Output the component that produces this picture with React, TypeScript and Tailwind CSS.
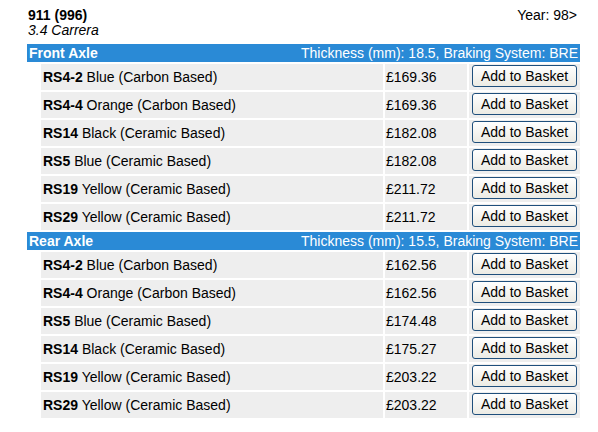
import React from "react";

type Item = { code: string; desc: string; price: string };

const front: Item[] = [
  { code: "RS4-2", desc: "Blue (Carbon Based)", price: "£169.36" },
  { code: "RS4-4", desc: "Orange (Carbon Based)", price: "£169.36" },
  { code: "RS14", desc: "Black (Ceramic Based)", price: "£182.08" },
  { code: "RS5", desc: "Blue (Ceramic Based)", price: "£182.08" },
  { code: "RS19", desc: "Yellow (Ceramic Based)", price: "£211.72" },
  { code: "RS29", desc: "Yellow (Ceramic Based)", price: "£211.72" },
];

const rear: Item[] = [
  { code: "RS4-2", desc: "Blue (Carbon Based)", price: "£162.56" },
  { code: "RS4-4", desc: "Orange (Carbon Based)", price: "£162.56" },
  { code: "RS5", desc: "Blue (Ceramic Based)", price: "£174.48" },
  { code: "RS14", desc: "Black (Ceramic Based)", price: "£175.27" },
  { code: "RS19", desc: "Yellow (Ceramic Based)", price: "£203.22" },
  { code: "RS29", desc: "Yellow (Ceramic Based)", price: "£203.22" },
];

function Section({ title, info, items }: { title: string; info: string; items: Item[] }) {
  return (
    <>
      <tr>
        <td colSpan={4} className="bg-[#2a8ad6] text-white h-[18px] p-0 leading-[18px]">
          <div className="flex justify-between px-[2px]">
            <span className="font-bold">{title}</span>
            <span>{info}</span>
          </div>
        </td>
      </tr>
      {items.map((it, i) => (
        <tr key={i} className="h-[26px]">
          <td className="p-0 w-[12px]"></td>
          <td className="bg-[#eeeeee] pl-[2px] p-0 w-[342px]">
            <span className="font-bold">{it.code}</span> {it.desc}
          </td>
          <td className="bg-[#eeeeee] pl-[1px] p-0 w-[82px]">{it.price}</td>
          <td className="bg-[#eeeeee] p-0 text-center w-[111px]">
            <button className="h-[22px] w-[105px] mt-[-3px] rounded-[3px] border border-[#1f4f7c] bg-gradient-to-b from-white to-[#ecebe4] text-black text-[14px] leading-none align-middle">
              Add to Basket
            </button>
          </td>
        </tr>
      ))}
    </>
  );
}

export default function App() {
  return (
    <div className="bg-white w-[598px] h-[432px] text-[14px] text-black" style={{ fontFamily: '"Liberation Sans", Arial, sans-serif' }}>
      <table className="ml-[25px] mt-[6px] w-[557px] border-separate border-spacing-[2px]">
        <tbody>
          <tr>
            <td colSpan={4} className="p-0 pl-[1px] pb-[4px]">
              <div className="flex justify-between leading-[15px]">
                <div>
                  <div className="font-bold">911 (996)</div>
                  <div className="italic">3.4 Carrera</div>
                </div>
                <div className="pr-[3px]">Year: 98&gt;</div>
              </div>
            </td>
          </tr>
          <Section title="Front Axle" info="Thickness (mm): 18.5, Braking System: BRE" items={front} />
          <Section title="Rear Axle" info="Thickness (mm): 15.5, Braking System: BRE" items={rear} />
        </tbody>
      </table>
    </div>
  );
}
